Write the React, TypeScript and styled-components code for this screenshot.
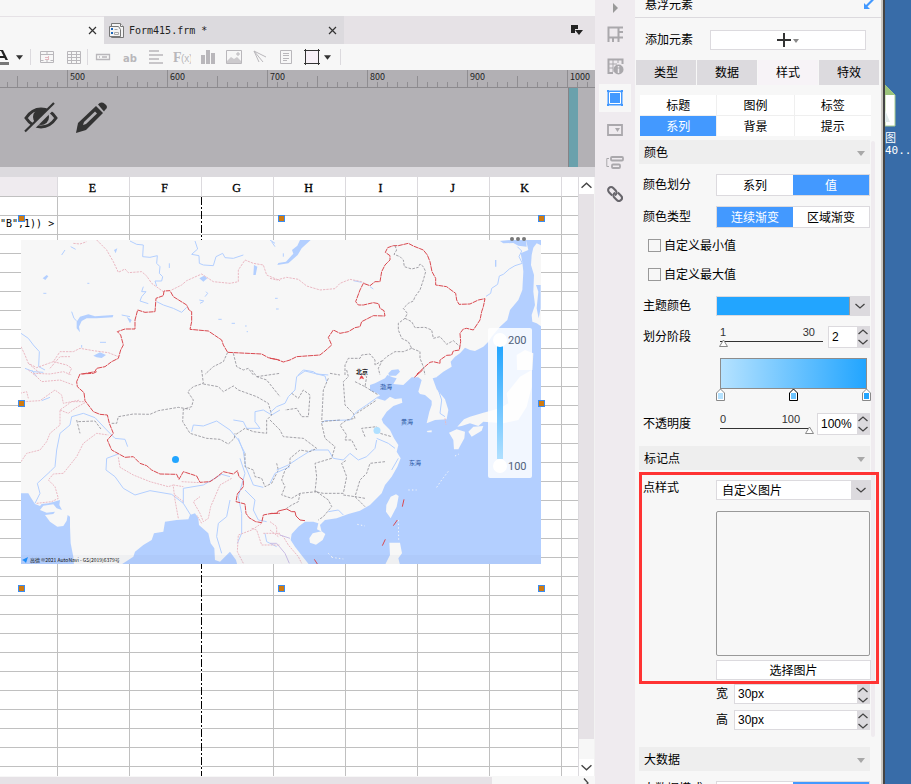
import React from "react";
import styled, { createGlobalStyle, css } from "styled-components";

const blue = "#4399ff";
const line = "#dcdade";
const pale = "#f7f7f7";

const GlobalStyle = createGlobalStyle`
  * { box-sizing: border-box; }
  body {
    margin: 0;
    overflow: hidden;
    background: ${pale};
    color: #000;
    font: 12px/16px "Liberation Sans", "Noto Sans CJK SC", sans-serif;
  }
  button, input, select { font: inherit; color: inherit; margin: 0; padding: 0; border: 0; border-radius: 0; background: none; }
  svg { display: block; flex: none; }
`;

const Page = styled.div`
  display: flex;
  height: 100vh;
  overflow: hidden;
`;

/* ---------- editor ---------- */

const Editor = styled.main`
  flex: 1;
  min-width: 0;
  display: flex;
  flex-direction: column;
  background: ${pale};
`;

const TitleSpace = styled.div`
  flex: none;
  height: 16px;
`;

const TabStrip = styled.div`
  flex: none;
  display: flex;
  height: 28px;
  background: #e6e2e6;
  justify-content: space-between;
`;

const TabGroup = styled.div`
  display: flex;
`;

const FileTab = styled.div<{ $active?: boolean }>`
  display: flex;
  align-items: center;
  gap: 4px;
  width: ${(p) => (p.$active ? 104 : 240)}px;
  padding: 0 7px 0 4px;
  background: ${(p) => (p.$active ? pale : line)};
  border-top: 1px solid ${(p) => (p.$active ? "#e6e2e6" : line)};
  font-family: "DejaVu Sans Mono", monospace;
  font-size: 10px;
  color: #222;
`;

const FileName = styled.span`
  flex: 1;
`;

const IconButton = styled.button`
  display: flex;
  align-items: center;
  justify-content: center;
`;

const StripMenu = styled(IconButton)`
  width: 37px;
`;

const Toolbar = styled.div`
  flex: none;
  display: flex;
  align-items: center;
  height: 26px;
`;

const Tool = styled(IconButton)<{ $w?: number }>`
  width: ${(p) => p.$w ?? 26}px;
  height: 26px;
  flex: none;
  color: #b9b7bb;
`;

const Divider = styled.span`
  width: 1px;
  height: 16px;
  margin: 0 1px;
  background: ${line};
`;

const Ruler = styled.div`
  flex: none;
  display: flex;
  height: 18px;
  overflow: hidden;
  background: #b2b0b4;
  border-bottom: 1px solid #8c8a8e;
`;

const RulerPart = styled.div`
  flex: none;
  width: 100px;
  height: 17px;
  padding-left: 2px;
  border-left: 1px solid #8f8d91;
  font: 9px/13px "Noto Sans CJK SC", sans-serif;
  color: #222;
  background:
    repeating-linear-gradient(90deg, transparent 0 9px, #8f8d91 9px 10px) 0 100% / 98px 5px no-repeat,
    linear-gradient(#8f8d91, #8f8d91) 49px 100% / 1px 11px no-repeat;
  &:first-child { margin-left: -33px; }
`;

const Canvas = styled.div`
  flex: none;
  display: flex;
  justify-content: space-between;
  height: 79px;
  background: #b3b1b5;
`;

const CanvasTools = styled.div`
  display: flex;
  align-items: flex-start;
  gap: 18px;
  padding: 14px 0 0 24px;
`;

const Widget = styled.div`
  width: 10px;
  margin-right: 17px;
  background: #6aa1ac;
  border-left: 1px solid #858387;
`;

const Gap = styled.div`
  flex: none;
  height: 10px;
  background: ${line};
`;

const SheetArea = styled.div`
  flex: 1;
  min-height: 0;
  display: flex;
`;

const Sheet = styled.div`
  position: relative;
  flex: 1;
  min-width: 0;
  overflow: hidden;
  background: #fff;
`;

const Grid = styled.table`
  table-layout: fixed;
  width: 634px;
  border-collapse: separate;
  border-spacing: 0;
`;

const HeadCell = styled.th<{ $selected?: boolean }>`
  width: ${(p) => (p.$selected ? 58 : 72)}px;
  height: 20px;
  padding: 3px 2px 0 0;
  font: 12px/16px "Liberation Serif", serif;
  -webkit-text-stroke: 0.3px #000;
  background: ${(p) => (p.$selected ? "#efebef" : "#fff")};
  border-right: 1px solid ${line};
  border-bottom: 1px solid #c0c0c0;
`;

const Cell = styled.td`
  height: 19px;
  padding: 0 5px 3px 0;
  border-right: 1px solid #c0c0c0;
  border-bottom: 1px solid #c0c0c0;
  font: 10px/14px "DejaVu Sans Mono", monospace;
  text-align: right;
  white-space: nowrap;
`;

const PageBreak = styled.div`
  position: absolute;
  left: 201px;
  top: 20px;
  bottom: 0;
  width: 1px;
  background: repeating-linear-gradient(#000 0 8px, #fff 8px 10px, #000 10px 12px, #fff 12px 14px);
`;

const Floating = styled.div`
  position: absolute;
  left: 18px;
  top: 38px;
  width: 527px;
  height: 377px;
`;

const Handles = styled.div`
  position: absolute;
  inset: 0;
  display: grid;
  grid-template-columns: repeat(3, 7px);
  grid-template-rows: repeat(3, 7px);
  justify-content: space-between;
  align-content: space-between;
`;

const Handle = styled.i<{ $hidden?: boolean }>`
  background: #cf7a10;
  border: 1px solid #3c8cf0;
  visibility: ${(p) => (p.$hidden ? "hidden" : "visible")};
`;

const MapHolder = styled.div`
  position: absolute;
  left: 3px;
  top: 25px;
`;

const MoreDots = styled.div`
  position: absolute;
  right: 19px;
  top: 22px;
`;

const ScrollColumn = styled.div`
  flex: none;
  width: 17px;
  display: flex;
  flex-direction: column;
  background: ${pale};
  border-left: 1px solid ${line};
  border-right: 1px solid #f2f2f2;
`;

const ScrollButton = styled(IconButton)`
  height: 17px;
  background: #fff;
`;

const ScrollThumb = styled.div`
  flex: 1;
  margin-bottom: 20px;
  background: #e6e2e6;
`;

const ScrollRow = styled.div`
  flex: none;
  display: flex;
  justify-content: space-between;
  height: 8px;
  padding-top: 1px;
  overflow: hidden;
`;

const RowThumb = styled.div`
  width: 492px;
  background: #e6e2e6;
`;

const RowArrow = styled.div`
  padding: 1px 4px 0 0;
`;

/* ---------- side rail ---------- */

const Rail = styled.nav`
  flex: none;
  width: 40px;
  display: flex;
  flex-direction: column;
  align-items: center;
  gap: 4px;
  background: #efebef;
  overflow: hidden;
`;

const RailButton = styled(IconButton)<{ $on?: boolean; $first?: boolean }>`
  flex: none;
  width: 32px;
  height: ${(p) => (p.$first ? 16 : 28)}px;
  background: ${(p) => (p.$on ? pale : "none")};
  color: #aaa8ac;
`;

/* ---------- property panel ---------- */

const Panel = styled.aside`
  flex: none;
  width: 250px;
  display: flex;
  flex-direction: column;
  background: ${pale};
  border-right: 2px solid #444;
  box-shadow: inset -2px 0 #cac7c2;
  padding-right: 2px;
  overflow: hidden;
`;

const PanelTitle = styled.header`
  flex: none;
  display: flex;
  justify-content: space-between;
  height: 18px;
  padding: 0 7px 0 10px;
  border-bottom: 1px solid ${line};
  line-height: 11px;
`;

const AddRow = styled.div`
  flex: none;
  display: flex;
  align-items: center;
  height: 42px;
  padding: 2px 15px 0 10px;
  gap: 17px;
`;

const AddButton = styled(IconButton)`
  flex: 1;
  height: 20px;
  background: #fff;
  border: 1px solid ${line};
`;

const Tabs = styled.div`
  flex: none;
  display: flex;
  gap: 1px;
  height: 25px;
  padding: 0 2px 0 1px;
`;

const Tab = styled.button<{ $on?: boolean }>`
  flex: 1;
  background: ${(p) => (p.$on ? "#f7f3f7" : line)};
`;

const SubTabs = styled.div`
  flex: none;
  display: grid;
  grid-template-columns: repeat(3, 1fr);
  grid-auto-rows: 20px;
  gap: 1px;
  margin: 10px 10px 4px 5px;
  background: #efefef;
`;

const Choice = styled.button<{ $on?: boolean }>`
  flex: 1;
  padding-top: 2px;
  background: ${(p) => (p.$on ? blue : "#fff")};
  color: ${(p) => (p.$on ? "#fff" : "#000")};
`;

const Body = styled.div`
  flex: 1;
  min-height: 0;
  display: flex;
  padding: 0 6px 0 4px;
`;

const Fields = styled.div`
  flex: 1;
  min-width: 0;
`;

const Track = styled.div`
  flex: none;
  width: 4px;
  height: 596px;
  margin-top: 1px;
  border-radius: 2px;
  background: #efebef;
`;

const Section = styled.button`
  display: flex;
  align-items: center;
  justify-content: space-between;
  width: 100%;
  height: 24px;
  padding: 2px 5px 0 5px;
  border-right: 1px solid ${pale};
  background: #eee;
`;

const Row = styled.div<{ $top: number; $h?: number; $start?: boolean }>`
  display: grid;
  grid-template-columns: 73px 1fr;
  align-items: ${(p) => (p.$start ? "start" : "center")};
  height: ${(p) => p.$h ?? 22}px;
  margin-top: ${(p) => p.$top}px;
  padding: 0 1px 0 4px;
`;

const Shrink = styled.div`
  height: 11px;
`;

const Segments = styled.div`
  display: flex;
  height: 22px;
  border: 1px solid ${line};
`;

const Check = styled.label<{ $top: number }>`
  display: flex;
  align-items: center;
  gap: 3px;
  height: 13px;
  margin: ${(p) => p.$top}px 0 0 9px;
`;

const Box = styled.input`
  appearance: none;
  width: 13px;
  height: 13px;
  border: 1px solid #999 !important;
  background: ${pale};
`;

const Combo = styled.div`
  display: flex;
  height: 20px;
  border: 1px solid ${line};
  background: #fff;
`;

const Swatch = styled.button`
  flex: 1;
  background: #22a5ff;
  border-right: 1px solid #9a9a9a;
`;

const Drop = styled.span`
  display: flex;
  align-items: center;
  justify-content: center;
  width: 19px;
  background: ${line};
`;

const Select = styled.select`
  flex: 1;
  min-width: 0;
  appearance: none;
  padding: 1px 0 0 5px;
`;

const SliderField = styled.div`
  display: flex;
  height: 22px;
`;

const SliderBox = styled.div`
  flex: 1;
  min-width: 0;
  padding: 0 3px;
`;

const Scale = styled.div<{ $wide?: boolean }>`
  display: flex;
  justify-content: space-between;
  padding: 0 ${(p) => (p.$wide ? 14 : 10)}px 0 1px;
  font-size: 11px;
  line-height: 12px;
  color: #333;
`;

const thumb = encodeURIComponent(
  '<svg xmlns="http://www.w3.org/2000/svg" width="9" height="8"><path d="M4.500 1L8.500 7.500H.5Z" fill="#fff" stroke="#888"/></svg>'
);

const Range = styled.input<{ $tail?: boolean }>`
  appearance: none;
  display: block;
  width: 100%;
  height: 10px;
  background: linear-gradient(#333, #333) 1px 3px / calc(100% - 3px) 1px no-repeat;
  ${(p) => p.$tail && css`background-size: calc(100% - 6px) 1px;`}
  &::-webkit-slider-thumb {
    appearance: none;
    width: 9px;
    height: 8px;
    background: url("data:image/svg+xml,${thumb}");
  }
`;

const Spin = styled.div<{ $w?: number }>`
  display: flex;
  ${(p) => (p.$w ? css`width: ${p.$w}px;` : css`flex: 1;`)}
  min-width: 0;
  height: 100%;
  border: 1px solid ${line};
  background: #fff;
`;

const SpinInput = styled.input`
  flex: 1;
  min-width: 0;
  width: 0;
  padding-left: 3px;
`;

const Arrows = styled.div`
  flex: none;
  width: 12px;
  display: flex;
  flex-direction: column;
  background: ${line};
`;

const Arrow = styled(IconButton)`
  flex: 1;
`;

const GradientBox = styled.div`
  margin: 10px 4px 0 81px;
`;

const GradientBar = styled.div`
  height: 31px;
  border: 1px solid #8c8c8c;
  background: linear-gradient(90deg, #b5e2ff, #22a5ff);
`;

const Stops = styled.div`
  display: flex;
  justify-content: space-between;
  margin: -1px -4px 0;
`;

const PointGroup = styled.div`
  position: relative;
  padding: 10px 0 4px;
  &::after {
    content: "";
    position: absolute;
    inset: 2px -8px 0 0;
    border: 3px solid #ff3333;
    pointer-events: none;
  }
`;

const PointRow = styled.div`
  display: grid;
  grid-template-columns: 73px 1fr;
  padding-left: 4px;
`;

const Preview = styled.div`
  height: 145px;
  margin: 11px 1px 4px 0;
  border: 1px solid #999;
  border-radius: 2px;
`;

const Pick = styled.button`
  display: block;
  width: 100%;
  height: 20px;
  padding-top: 1px;
  background: #fff;
  border: 1px solid ${line};
`;

const SizeRow = styled.label`
  display: flex;
  align-items: center;
  height: 20px;
  gap: 6px;
  margin-bottom: 6px;
  padding: 0 1px 0 77px;
`;

const Desktop = styled.div`
  flex: none;
  width: 26px;
  padding-top: 85px;
  background: #386ca8;
  color: #fff;
  line-height: 12px;
  overflow: hidden;
  white-space: nowrap;
  font-family: "DejaVu Sans Mono", "Noto Sans CJK SC", monospace;
`;

const DesktopName = styled.div`
  padding-top: 6px;
  font-size: 11px;
`;

/* ---------- drawings ---------- */

const Chevron = ({ dir, size = 10 }: { dir: "up" | "down" | "right"; size?: number }) => (
  <svg width={size} height={size} viewBox="0 0 10 10" fill="none" stroke="#444" strokeWidth={1.3}>
    <path d={dir === "up" ? "M.5 7L5 3l4.500 4" : dir === "down" ? "M.5 3L5 7l4.500-4" : "M3 .5L7 5 3 9.500"} />
  </svg>
);

const Caret = ({ color = "#333", w = 8 }: { color?: string; w?: number }) => (
  <svg width={w} height={5} viewBox="0 0 8 5"><path d="M0 0h8L4 5z" fill={color} /></svg>
);

const Cross = () => (
  <svg width="9" height="9" viewBox="0 0 9 9" stroke="#333" strokeWidth="1.200"><path d="M1 1l7 7M8 1L1 8" /></svg>
);

const FileIcon = () => (
  <svg width="17" height="17" viewBox="0 0 17 17" fill="#f4f4f4" stroke="#777">
    <path d="M3.500 1.500h9l3 3v11h-12z" /><path d="M12.500 1.500v3h3" />
    <path d="M1.500 4.500h9l2 3v7h-11z" />
    <path d="M3 6h2v2H3zM3 10h2v2H3z" fill="#1c66b8" stroke="none" />
    <path d="M6.500 7.500h3M6.500 10.500h4v2h-4z" stroke="#aaa" />
  </svg>
);

const ToolSvg = ({ children, w = 16 }: { children: React.ReactNode; w?: number }) => (
  <svg width={w} height="16" viewBox={`0 0 ${w} 16`} fill="none" stroke="currentColor">{children}</svg>
);

const Stop = ({ fill, dark }: { fill: string; dark?: boolean }) => (
  <svg width="9" height="13" viewBox="0 0 9 13">
    <path d="M4.500 1L8.500 5v7.500h-8V5z" fill="#fff" stroke={dark ? "#000" : "#888"} />
    <path d="M2 5h5v6H2z" fill={fill} />
  </svg>
);

const sea = "#b3cfff";
const land = "#f7f7f7";

/* The map is drawn in four tiles, each on a grid three times finer than the page. */
const MapDrawing = () => (
  <svg width="520" height="324" viewBox="21 240 520 324" role="img" aria-label="地图">
    <defs>
      <linearGradient id="scale" x1="0" y1="0" x2="0" y2="1">
        <stop offset="0" stopColor="#22a5ff" /><stop offset="1" stopColor="#b0e0ff" />
      </linearGradient>
    </defs>
    <rect x="21" y="240" width="520" height="324" fill={land} />

    <g transform="translate(270 175) scale(.33333)" fill="none" strokeWidth="3">
      <path fill={sea} d="M768 195L775 225 752 235 757 262 760 290 757 345 745 375 720 405 712 435 690 455 665 485 655 500 640 515 615 528 600 525 585 518 570 535 555 545 542 560 545 575 520 590 500 606H815V195z" />
      <path fill={land} d="M790 218L800 205 815 212V455L800 445 787 440 785 420 795 390 790 350 792 300 783 270 785 240zM740 540L765 525 790 535 786 606H742z" />
      <path fill={sea} d="M690 198L735 194 768 196 770 215 745 212 730 204 700 205zM122 195L95 220 83 240 55 265 22 270 25 264 48 260 70 236 66 225 82 212 90 195zM355 595L365 585 385 583 390 590 378 602 357 602zM675 255h4v20h-4zM798 330L805 350 800 400 806 430 812 400V330z" />
      <path stroke={sea} d="M742 215L755 228 747 245 757 265 735 272 718 282 700 298 688 303 683 328 665 340 662 355 648 364M0 195L15 205M85 600L100 585 130 590 140 597 175 600M250 317L275 322M300 335L310 342M15 370h8M18 402h8M40 235v10" />
      <g stroke="#eab9c3" strokeDasharray="7 3">
        <path d="M0 310L20 315 50 307 85 313 110 333 150 345 195 341 210 325 240 313 275 320 290 328" />
      </g>
      <path stroke="#d9484f" strokeDasharray="15 2" d="M0 550L20 553 40 561 60 555 80 545 150 540 165 528 185 510 175 487 190 465 210 475 235 470 255 458 270 455 275 440 310 422 345 423 342 407 330 400 326 386 310 383 280 390 265 390 257 380 270 345 280 325 300 332 315 320 330 320 335 290 345 270 360 255 360 242 346 232 353 218 370 212 385 212 415 205 430 213 460 225 472 240 480 260 486 290 497 310 497 330 530 335 543 345 557 355 560 375 567 388 600 387 625 375 645 371 640 395 635 410 630 435 610 465 590 460 580 462 570 475 572 500 568 525 550 528 545 540 530 541 510 555 510 565 490 560 480 562 465 575 440 598" />
      <g stroke="#929098" strokeDasharray="8 4" strokeWidth="2.500">
        <path d="M375 212L380 225 372 238 390 245 400 255 403 275 425 282 445 277 450 267 460 275 467 290 460 315 450 345 435 365 430 378 415 385 400 400 412 415 405 430 385 445 385 465 395 490 415 500 425 520 450 530 450 550 460 575 465 600" />
        <path d="M405 430L425 440 435 458 465 457 485 465 490 490 510 485 530 508 550 497 570 515" />
        <path d="M425 520L400 530 375 530 350 545 335 560 325 580 330 600M225 600L225 570 235 550 270 550 275 540 300 537 315 555 315 570 340 555" />
      </g>
    </g>

    <g transform="translate(0 175) scale(.33333)" fill="none" strokeWidth="3">
      <path fill={sea} d="M230 440L240 425 265 418 285 424 340 420 338 427 290 430 260 430 245 438 237 455 240 472 230 460zM280 542L300 532 318 540 305 549 290 547zM598 310L612 302 622 310 610 320zM380 425L395 435 390 445zM762 270L772 275 767 300 760 300zM128 310L140 300 145 304 136 315zM342 225l10-5-5 15z" />
      <g stroke={sea}>
        <path d="M390 198L410 208 430 210 428 245 450 247 472 242 470 265 480 275 478 295 488 305 485 318 465 318 470 333M430 335L425 350 438 350 425 365 420 378 445 386M585 198L593 222 575 238 597 242 598 265 610 270 640 272 648 245 668 235 675 248 700 250 730 240M470 380L490 390 520 400 545 412 560 397M63 475L85 490 100 510 118 530 116 575 135 585M365 420L390 425M598 375L612 378M215 410L222 430 230 438M300 502h18M75 580L100 590 130 592M185 240l10-15M212 215l15 8M618 350l5 5-8 10M600 385l10-5M655 433h10M695 445h10M735 453h5M740 470h4M130 355h9M262 325h6M508 265v14M815 200l10 15M245 510v8" />
      </g>
      <g stroke="#eab9c3" strokeDasharray="7 3">
        <path d="M290 195L320 225 340 260 355 292 375 282 385 293 425 290 440 303 455 325 490 350M220 205L240 207 260 200M515 345L545 330 560 317 605 297 640 320 690 325 715 320 715 285 735 255 760 265 790 270 800 300 840 317M63 515L75 540 85 565 110 578 160 560 180 530 220 530 240 520 280 527 325 533 355 545M150 580L180 545 210 545M160 560L200 570 215 580 205 600M85 565L120 595" />
      </g>
      <path stroke="#d9484f" strokeDasharray="15 2" d="M247 597L285 590 290 580 315 575 335 560 355 550 362 525 370 510 362 480 352 470 375 462 405 462 405 435 413 405 435 412 465 410 468 370 490 362 492 348 510 347 520 365 560 390 567 405 575 410 575 440 570 463 625 468 665 495 670 510 683 532 785 537 805 548 840 556" />
      <g stroke="#929098" strokeDasharray="8 4" strokeWidth="2.500">
        <path d="M683 532L670 560 640 575 615 598M700 535L710 575 730 585 745 580 760 600" />
      </g>
    </g>

    <g transform="translate(0 370) scale(.33333)" fill="none" strokeWidth="3">
      <path fill={sea} d="M60 370H85L92 382 105 402 120 408 125 402 145 400 162 395 180 390 178 405 186 420 170 415 160 403 130 407 120 420 140 428 165 425 160 432 135 435 150 455 172 470 190 468 200 452 203 435 210 440 210 470 212 520 220 560 222 585H60zM362 585L400 560 405 545 430 525 455 510 462 490 490 485 495 455 530 450 565 448 570 435 585 430 595 445 597 465 625 490 632 520 643 535 645 570 660 575 690 545 708 570 712 585z" />
      <g stroke={sea}>
        <path d="M105 400L120 370 112 340 150 305 165 290 170 240 180 190 210 165 215 140 250 130 285 143 320 180 345 205 375 208 383 230M355 252L320 265 318 300 345 320 370 355 405 375 450 362 515 373 550 400 550 355 610 345 665 313 690 320M550 400L575 440M720 265L735 310 715 380 725 430 725 490 712 520M690 390L680 440 655 460 650 500 665 550M715 205L730 245 737 290 760 345 790 352M735 360L765 390 760 420 775 450 800 455M575 185L580 165 610 168 650 153 690 180 715 210 735 250M700 150L730 155 740 175 780 175 765 155 765 125 790 120 815 135 840 120M795 490L800 515 830 530M125 92L150 82M95 0L110 20" />
      </g>
      <g stroke="#eab9c3" strokeDasharray="6 3">
        <path d="M63 275L80 250 120 240 140 215 150 190 180 165 180 120 215 95 255 95M85 0L110 20 125 35 180 30 220 45M70 95L120 92 165 60 185 75 190 100 240 90M180 120L205 130 225 115 255 98M60 70L80 65 85 85M100 10L150 12 190 5 215 15M110 400L155 395 175 385 165 350 145 330 160 312 190 310 230 260 250 220 290 190 325 195M355 262L360 292 400 315 450 335 505 350 520 345M520 345L550 350M545 335L600 338M520 350L525 390 535 445M525 375L550 395M695 325L660 345 645 380 632 410 625 445 610 455 600 430 580 395 600 380M605 460L590 435M785 460L755 480 715 495 712 545 730 580M755 475L770 480 785 525 840 525M790 490L840 490" />
      </g>
      <path stroke="#d9484f" strokeDasharray="15 2" d="M290 5L280 10 240 12 230 35 232 50 252 68 255 92 280 125 300 133 322 135 328 160 340 190 322 210 335 240 375 262 400 260 420 280 440 287 455 300 480 312 530 313 537 328 550 305 590 318 600 337 630 335 645 325 670 305 700 312 712 302 717 320 730 330 730 350 712 372 708 395 735 402 738 430 747 443 767 455 785 458 790 435 815 430 840 430" />
      <g stroke="#929098" strokeDasharray="8 4" strokeWidth="2.500">
        <path d="M335 160H350L355 140 400 132 450 133 475 122 535 112 570 118M605 0L610 40 580 50 563 65 580 90 575 110 550 118 548 155 570 190 620 205 660 208 685 222 703 205 705 190M610 42L655 50 670 65 700 48 715 60 770 80 805 100 815 135 800 150 800 190 760 185 735 175 705 195M755 0L770 20 800 30 840 80M735 250L735 290 760 300 765 320 785 325 795 350 815 340 835 300 830 280M230 150L240 190M235 155L285 153 305 180M770 20L840 10" />
      </g>
    </g>

    <g transform="translate(270 370) scale(.33333)" fill="none" strokeWidth="3">
      <path fill={sea} d="M535 0H815V585H118L90 550 75 530 62 510 65 492 85 470 105 455 130 455 145 460 141 478 155 485 150 465 165 450 200 445 235 432 270 422 300 405 335 370 345 345 365 320 382 290 392 265 380 245 385 225 372 205 360 180 340 160 335 148 350 125 370 108 397 98 395 85 375 87 360 80 345 92 320 85 330 76 318 68 300 62 300 45 315 40 345 25 352 15 368 22 380 25 370 42 400 45 425 22 445 22 455 30 445 65 450 72 465 75 485 92 485 105 478 125 470 160 495 150 530 148 535 120 525 88 500 58 488 25 505 20z" />
      <path fill={land} d="M378 373L386 378 380 410 362 445 348 425 349 405 362 380zM118 505L128 490 155 484 166 492 158 510 138 524 120 518zM358 518L390 518 396 550 385 565 390 585H345L360 555zM537 188L560 178 585 185 583 205 565 238 552 238 550 210zM562 170L582 148 600 140 640 128 690 115 715 100 710 70 750 20 785 0 785 50 770 110 745 150 700 160 640 155 625 168 600 160 575 168zM595 185L610 170 640 168 635 182 605 200zM470 183l15-2v6h-12z" />
      <g stroke={land} strokeDasharray="4 7"><path d="M500 352L515 330 538 300M415 360H440M555 258L567 252M262 463L285 468M385 450L386 510M175 550L190 565M185 562L220 567" /></g>
      <g stroke={sea}>
        <path d="M0 128L20 110 45 100 55 80 75 60 80 20 105 3 165 18 170 35M20 300L55 285 85 265 125 240 175 240 190 265 220 270 240 250 265 270 290 260 315 235 320 210M155 160L165 152 240 150 260 125 290 105 325 80M0 340L15 310 60 290M320 205L355 220 375 235M175 425L205 420 220 435M505 60L515 90 510 130 525 140M365 300L385 265" />
      </g>
      <g stroke="#929098" strokeDasharray="8 4" strokeWidth="2.500">
        <path d="M230 0L235 20 220 35 225 105 250 130 255 145 230 150 210 165 230 195 225 210 245 210 260 240M175 25L160 60 155 155 210 150M65 70L85 85 100 60 120 75 115 140 95 140 80 115 45 120M0 150L30 180 40 200 100 205 140 235 120 245 90 240 60 265 60 285 45 300 35 330 45 350 35 375 65 385 90 370 140 365M155 160L165 205 195 230 185 265M185 265L135 280 140 320 135 365 160 370 220 370 230 320 215 280 230 270M345 275L300 280 290 310 270 330 255 380 285 385M285 200L275 175 320 170 330 190 365 200M260 130L290 110 320 90M220 375L255 380 270 395 285 410M90 370L85 395 65 405 50 415M140 365L175 390 185 410 160 440 145 450M255 35L285 50 290 20 275 10M180 10L210 15M285 50L325 75" />
      </g>
      <g stroke="#d9484f">
        <path d="M433 22L458 0M0 431L20 430 25 423 50 417 65 425 75 425 78 438 90 450 105 452" />
        <path d="M402 388L397 410M382 450L370 467M346 508L337 527M133 568L142 582" />
      </g>
      <path stroke="#eab9c3" strokeDasharray="6 3" d="M0 455L20 470 20 490 40 500 55 525 85 560 95 580M525 145L528 165M0 480L25 500" />
      <path stroke="#c9bde4" d="M0 520L20 520 45 550 58 580M30 495L60 505" />
      <path fill="#e8474c" d="M270 22l4-6 5 4 3 8-8-3-6 4z" />
    </g>

    <rect x="21" y="555" width="520" height="9" fill="#7080b0" opacity=".06" />
    <g fontFamily="Noto Sans CJK SC, sans-serif" fontSize="6">
      <text x="356" y="374" fontWeight="bold" fill="#222">北京</text>
      <g fill="#1e4f9c"><text x="380" y="389">渤海</text><text x="401" y="424">黄海</text><text x="409" y="465">东海</text></g>
      <text x="30" y="562" fill="#111" fontSize="5">高德 ©2021 AutoNavi - GS(2019)6379号</text>
    </g>
    <path d="M22 560l6-3-2 6-2-2z" fill="#1d8cf8" />
    <circle cx="175.500" cy="459.500" r="3.500" fill="#22a5ff" />
    <circle cx="377" cy="430.500" r="3.500" fill="#b0e0ff" />

    <rect x="488" y="328" width="44" height="150" rx="2" fill="#fff" opacity=".83" />
    <rect x="497" y="346" width="6" height="113" fill="url(#scale)" />
    <circle cx="500" cy="340" r="7" fill="#fff" />
    <circle cx="500" cy="466" r="7" fill="#fff" />
    <g fontFamily="Roboto, sans-serif" fontSize="11" fill="#50617a">
      <text x="508" y="344">200</text><text x="508" y="470">100</text>
    </g>
  </svg>
);

/* ---------- parts ---------- */

const SpinBox = ({ value, name, w }: { value: string; name: string; w?: number }) => (
  <Spin $w={w}>
    <SpinInput defaultValue={value} aria-label={name} />
    <Arrows>
      <Arrow aria-label="增加"><Chevron dir="up" /></Arrow>
      <Arrow aria-label="减少"><Chevron dir="down" /></Arrow>
    </Arrows>
  </Spin>
);

const SectionHead = ({ title }: { title: string }) => (
  <Section>{title}<Caret color="#a8a8a8" /></Section>
);

const Pair = ({ a, b, on }: { a: string; b: string; on: number }) => (
  <Segments>
    <Choice $on={on === 0}>{a}</Choice>
    <Choice $on={on === 1}>{b}</Choice>
  </Segments>
);

const columns = ["E", "F", "G", "H", "I", "J", "K", ""];
const rows = Array.from({ length: 32 }, (_, i) => i);

export default function App() {
  return (
    <Page>
      <GlobalStyle />
      <Editor>
        <TitleSpace />
        <TabStrip>
          <TabGroup>
            <FileTab $active><FileName /><IconButton aria-label="关闭"><Cross /></IconButton></FileTab>
            <FileTab><FileIcon /><FileName>Form415.frm *</FileName><IconButton aria-label="关闭"><Cross /></IconButton></FileTab>
          </TabGroup>
          <StripMenu aria-label="标签列表">
            <svg width="12" height="10" viewBox="0 0 12 10" fill="#222"><path d="M0 0h7v4H4v4H0zM4 5h8L8 10z" /></svg>
          </StripMenu>
        </TabStrip>
        <Toolbar>
          <Tool $w={9} aria-label="字体颜色">
            <svg width="9" height="16" viewBox="0 0 9 16"><path d="M0 1h3l5 10H5.500L4.500 9H0V7h3.500L1 2H0z" fill="#222" /><path d="M0 13h9v3H0z" fill="#777" /></svg>
          </Tool>
          <Tool $w={20} aria-label="颜色列表"><Caret w={7} /></Tool>
          <Divider />
          <Tool $w={30} aria-label="合并">
            <ToolSvg><path d="M1.500 2.500h13v11h-13zM1.500 5.500h13M8 2.500v3M8 11v3M1.500 11.500h3M11.500 11.500h3" /><path d="M6 8.500h4M6 10.500h4M9.500 7v4" stroke="#e3b8c0" /></ToolSvg>
          </Tool>
          <Tool $w={24} aria-label="表格">
            <ToolSvg><path d="M1.500 2.500h13v12h-13zM1.500 5.500h13M1.500 8.500h13M1.500 11.500h13M5.500 2.500v12M10.500 2.500v12" /></ToolSvg>
          </Tool>
          <Divider />
          <Tool $w={28} aria-label="文本框">
            <ToolSvg><path d="M1.500 5.500h13v5h-13zM4 8h1M7 8h5" strokeWidth="1.300" /></ToolSvg>
          </Tool>
          <Tool aria-label="文本">
            <ToolSvg><text x="1" y="13" fontFamily="DejaVu Sans" fontWeight="bold" fontSize="10" fill="currentColor" stroke="none">ab</text></ToolSvg>
          </Tool>
          <Tool aria-label="富文本"><ToolSvg><path d="M1 2h10M1 6h14M1 10h10M1 14h14" strokeWidth="1.600" /></ToolSvg></Tool>
          <Tool aria-label="公式">
            <ToolSvg w={18}><text x="0" y="13" fontFamily="Liberation Serif" fontWeight="bold" fontSize="14" fill="currentColor" stroke="none">F</text><text x="8" y="13" fontFamily="Liberation Sans" fontSize="10" fill="currentColor" stroke="none">(x)</text></ToolSvg>
          </Tool>
          <Tool aria-label="图表"><ToolSvg><path d="M1 6h4v9H1zM6 1h4v14H6zM11 4h4v11h-4z" fill="currentColor" stroke="none" /></ToolSvg></Tool>
          <Tool aria-label="图片">
            <ToolSvg><path d="M.5 1.500h15v13H.5z" /><path d="M1 12l4-4 3 2 3-2 4 4v2H1z" fill="currentColor" stroke="none" opacity=".7" /><path d="M11 4h2v2h-2z" /></ToolSvg>
          </Tool>
          <Tool aria-label="斜线"><ToolSvg><path d="M2 2L7 13M2 2l12 6M2 2l9 11" /></ToolSvg></Tool>
          <Tool aria-label="子报表">
            <ToolSvg><path d="M2.500 1.500h11v13h-11z" /><path d="M5 4.500h6M5 6.500h6M5 9.500h6M5 11.500h4" /></ToolSvg>
          </Tool>
          <Tool aria-label="悬浮元素">
            <svg width="16" height="16" viewBox="0 0 16 16" fill="#f7f0f7" stroke="#333"><path d="M1.500 1.500h13v13h-13z" /><path d="M1.500 0v16M14.500 0v16M0 1.500h16M0 14.500h16" /></svg>
          </Tool>
          <Tool $w={4} aria-label="更多"><Caret w={7} /></Tool>
          <Tool $w={10} as="span" />
          <Divider />
        </Toolbar>
        <Ruler>
          <RulerPart />
          {[500, 600, 700, 800, 900, 1000].map((n) => <RulerPart key={n}>{n}</RulerPart>)}
        </Ruler>
        <Canvas>
          <CanvasTools>
            <IconButton aria-label="隐藏">
              <svg width="34" height="31" viewBox="0 0 34 31" fill="none" stroke="#333">
                <path d="M2 16Q8 7 17 7T32 16Q26 25 17 25T2 16z" strokeWidth="3" />
                <circle cx="17" cy="15" r="8" fill="#333" stroke="none" />
                <path d="M3 31L33 1" stroke="#b3b1b5" strokeWidth="5" />
                <path d="M1 29.500L30 1" strokeWidth="2.200" />
              </svg>
            </IconButton>
            <IconButton aria-label="编辑">
              <svg width="31" height="31" viewBox="0 0 31 31" fill="#333">
                <path d="M20 4l7 7L10 28 0 31l2-10z" /><path d="M22 2.500Q25-1 29 2t0 6L28 9.500z" />
                <path d="M19 9.500l2 2L10 22l-3 1 1-3z" fill="#b3b1b5" />
              </svg>
            </IconButton>
          </CanvasTools>
          <Widget />
        </Canvas>
        <Gap />
        <SheetArea>
          <Sheet>
            <Grid>
              <thead>
                <tr><HeadCell $selected />{columns.map((c) => <HeadCell key={c}>{c}</HeadCell>)}</tr>
              </thead>
              <tbody>
                {rows.map((r) => (
                  <tr key={r}>
                    <Cell>{r === 1 && '"B",1)) >'}</Cell>
                    {columns.map((c) => <Cell key={c} />)}
                  </tr>
                ))}
              </tbody>
            </Grid>
            <PageBreak />
            <Floating>
              <MapHolder><MapDrawing /></MapHolder>
              <MoreDots>
                <svg width="16" height="4" viewBox="0 0 16 4" fill="#777"><circle cx="2" cy="2" r="2" /><circle cx="8" cy="2" r="2" /><circle cx="14" cy="2" r="2" /></svg>
              </MoreDots>
              <Handles>{rows.slice(0, 9).map((i) => <Handle key={i} $hidden={i === 4} />)}</Handles>
            </Floating>
          </Sheet>
          <ScrollColumn>
            <ScrollButton aria-label="向上"><Chevron dir="up" size={11} /></ScrollButton>
            <ScrollThumb />
            <ScrollButton aria-label="向下"><Chevron dir="down" size={11} /></ScrollButton>
          </ScrollColumn>
        </SheetArea>
        <ScrollRow><RowThumb /><RowArrow><Chevron dir="right" /></RowArrow></ScrollRow>
      </Editor>

      <Rail>
        <RailButton $first aria-label="展开"><svg width="5" height="10" viewBox="0 0 5 10"><path d="M0 0l5 5-5 5z" fill="#999" /></svg></RailButton>
        <RailButton aria-label="单元格元素">
          <svg width="17" height="17" viewBox="0 0 17 17" fill="none" stroke="currentColor" strokeWidth="2"><path d="M1.500 16V1.500H16M11.500 1v11M1 11.500h11M12 6h4M12 11.500h4M6 12v4M11.500 12v4" /></svg>
        </RailButton>
        <RailButton aria-label="单元格属性">
          <svg width="17" height="17" viewBox="0 0 17 17" fill="none" stroke="currentColor" strokeWidth="2"><path d="M6 15H1.500V1.500h14V6" /><path d="M6 2v12M11 2v3M2 6h8M2 10h4" strokeWidth="1" /><circle cx="11.500" cy="11.500" r="5" fill="currentColor" stroke="none" /><path d="M11.500 8v1.500M11.500 10.500V15" stroke="#efebef" strokeWidth="1.500" /></svg>
        </RailButton>
        <RailButton $on aria-label="悬浮元素">
          <svg width="16" height="16" viewBox="0 0 16 16"><path d="M0 0h16v16H0z" fill={blue} /><path d="M2.500 2.500h11v11h-11z" fill="none" stroke="#fff" /><path d="M0 2v12M16 2v12M2 0h12M2 16h12" stroke={pale} /></svg>
        </RailButton>
        <RailButton aria-label="控件设置">
          <svg width="16" height="12" viewBox="0 0 16 12" fill="none" stroke="currentColor" strokeWidth="1.800"><path d="M1 1h14v10H1z" /><path d="M8 4h5l-2.500 4z" fill="currentColor" stroke="none" /></svg>
        </RailButton>
        <RailButton aria-label="条件属性">
          <svg width="18" height="13" viewBox="0 0 18 13" fill="none" stroke="currentColor" strokeWidth="1.800"><rect x="5" y="1" width="12" height="3.500" rx="1" /><rect x="6" y="8.500" width="8" height="3.500" rx="1" /><path d="M3 2.500H.8v8H3" strokeWidth="1" /></svg>
        </RailButton>
        <RailButton aria-label="超级链接">
          <svg width="16" height="16" viewBox="0 0 16 16" fill="none" stroke="#68666c" strokeWidth="2.100"><g transform="rotate(45 8 8)"><path d="M7 11H2.500a3 3 0 010-6H6a3 3 0 012.800 4" /><path d="M9 5h4.500a3 3 0 010 6H10a3 3 0 01-2.800-4" /></g></svg>
        </RailButton>
      </Rail>

      <Panel>
        <PanelTitle>
          悬浮元素
          <svg width="10" height="10" viewBox="0 0 10 10" fill={blue}><path d="M0 9V3l2 2 6-6 2 1-6.500 6.500L6 9z" /></svg>
        </PanelTitle>
        <AddRow>
          添加元素
          <AddButton aria-label="添加元素">
            <svg width="22" height="14" viewBox="0 0 22 14"><path d="M0 7h14M7 0v14" stroke="#333" strokeWidth="2" /><path d="M16 6h6l-3 4z" fill="#888" /></svg>
          </AddButton>
        </AddRow>
        <Tabs>
          <Tab>类型</Tab><Tab>数据</Tab><Tab $on>样式</Tab><Tab>特效</Tab>
        </Tabs>
        <SubTabs>
          {["标题", "图例", "标签", "系列", "背景", "提示"].map((t) => <Choice key={t} $on={t === "系列"}>{t}</Choice>)}
        </SubTabs>
        <Body>
          <Fields>
            <SectionHead title="颜色" />
            <Row $top={10}>颜色划分<Pair a="系列" b="值" on={1} /></Row>
            <Row $top={10}>颜色类型<Pair a="连续渐变" b="区域渐变" on={0} /></Row>
            <Check $top={11}><Box type="checkbox" />自定义最小值</Check>
            <Check $top={16}><Box type="checkbox" />自定义最大值</Check>
            <Row $top={15} $h={20}>主题颜色<Combo><Swatch aria-label="主题颜色" /><Drop><Chevron dir="down" /></Drop></Combo></Row>
            <Row $top={10}>
              划分阶段
              <SliderField>
                <SliderBox><Scale><span>1</span><span>30</span></Scale><Range type="range" min={1} max={30} defaultValue={1} aria-label="划分阶段" /></SliderBox>
                <SpinBox value="2" name="划分阶段" w={42} />
              </SliderField>
            </Row>
            <GradientBox>
              <GradientBar />
              <Stops><Stop fill="#b5e2ff" /><Stop fill="#6cc4ff" dark /><Stop fill="#22a5ff" /></Stops>
            </GradientBox>
            <Row $top={12}>
              不透明度
              <SliderField>
                <SliderBox><Scale $wide><span>0</span><span>100</span></Scale><Range $tail type="range" min={0} max={100} defaultValue={100} aria-label="不透明度" /></SliderBox>
                <SpinBox value="100%" name="不透明度" w={53} />
              </SliderField>
            </Row>
            <Shrink />
            <SectionHead title="标记点" />
            <PointGroup>
              <PointRow>
                <label htmlFor="point-style">点样式</label>
                <div>
                  <Combo>
                    <Select id="point-style"><option>自定义图片</option></Select>
                    <Drop><Chevron dir="down" /></Drop>
                  </Combo>
                  <Preview />
                  <Pick>选择图片</Pick>
                </div>
              </PointRow>
            </PointGroup>
            <SizeRow>宽<SpinBox value="30px" name="宽" /></SizeRow>
            <SizeRow>高<SpinBox value="30px" name="高" /></SizeRow>
            <Shrink />
            <SectionHead title="大数据" />
            <Row $top={10} $start>大数据模式<Pair a="自动" b="开启" on={1} /></Row>
          </Fields>
          <Track />
        </Body>
      </Panel>

      <Desktop>
        <svg width="12" height="42" viewBox="0 0 12 42"><path d="M0 0l10 10v31H0z" fill="#fff" stroke="#a9cc8c" /><path d="M0 0l10 10H0z" fill="#9cc47c" /><path d="M0 25l5 12H0z" fill="#dfeaea" /></svg>
        <DesktopName>图<br />40...</DesktopName>
      </Desktop>
    </Page>
  );
}
